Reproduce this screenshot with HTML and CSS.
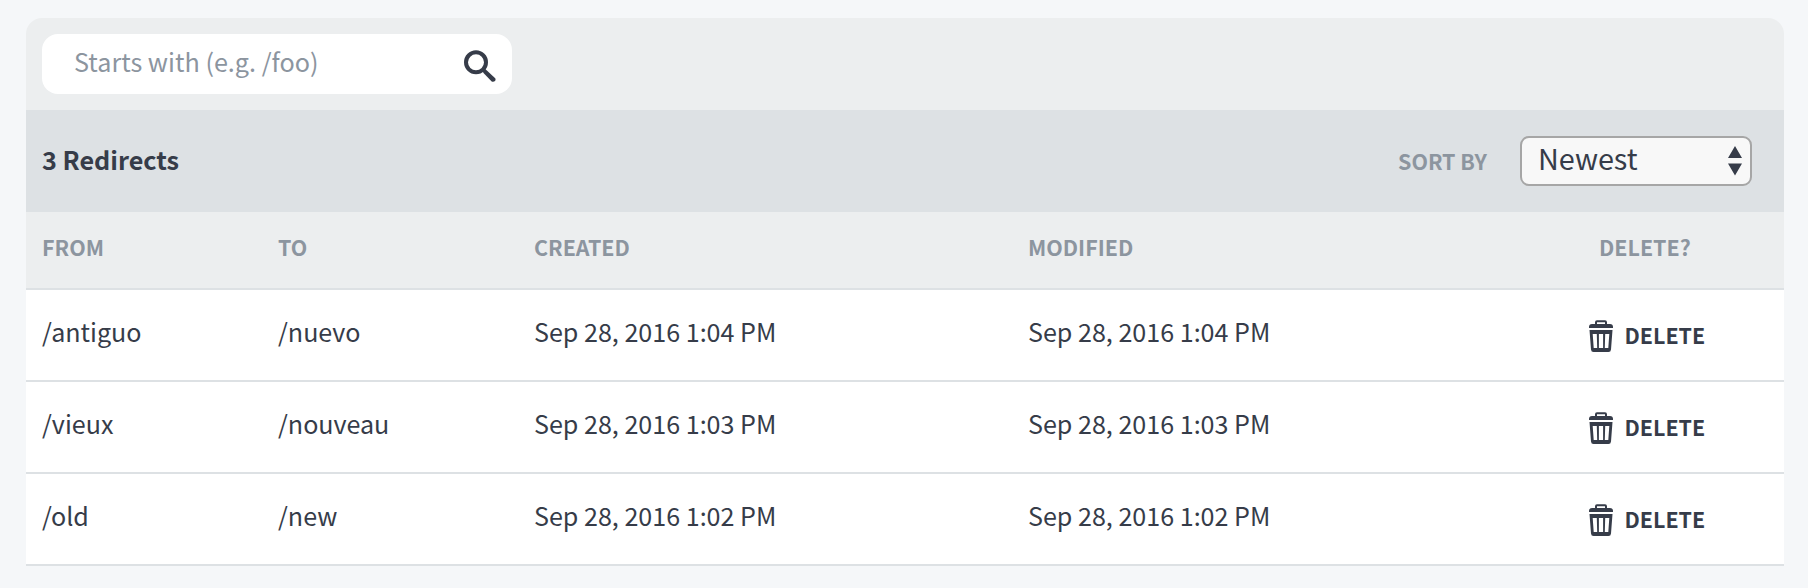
FILE: index.html
```html
<!DOCTYPE html>
<html lang="en">
<head>
<meta charset="utf-8">
<title>Redirects</title>
<link rel="stylesheet" href="styles.css">
</head>
<body>
<svg class="defs" width="0" height="0">
  <symbol id="trash" viewBox="0 0 24 32">
    <path d="M6 5V2.200Q6 .2 8 .2h8q2 0 2 2V5h-2V2.200H8V5z"/>
    <path d="M0 8V7q0-3 3-3h18q3 0 3 3v1z"/>
    <path fill-rule="evenodd" d="M.5 10h23L22 29.500Q21.800 32 19.500 32h-15Q2.200 32 2 29.500zM3.700 14l1 14H8.200l-.4-14zM9.900 14v14h4.200V14zM16.200 14l-.4 14h3.500l1-14z"/>
  </symbol>
</svg>
<main class="panel">
  <div class="toolbar">
    <label class="search">
      <input class="search-input" type="text" placeholder="Starts with (e.g. /foo)">
      <svg class="search-icon" width="32" height="32" viewBox="0 0 32 32"><circle cx="12" cy="12.300" r="10" fill="none" stroke="currentColor" stroke-width="4"/><path d="M18.500 21L21 18.800L31.200 28.200Q32 29.500 31 31Q29.500 32.300 27.700 31.500L19.500 23z"/></svg>
    </label>
  </div>
  <div class="summary">
    <h1 class="count">3 Redirects</h1>
    <div class="sort">
      <span class="sort-label">SORT BY</span>
      <div class="select"><span class="select-value">Newest</span>
        <svg class="select-arrows" width="14" height="30" viewBox="0 0 14 30"><path d="M7 0l7 12H0zM0 17.500h14L7 29.500z"/></svg>
      </div>
    </div>
  </div>
  <div class="row head"><span>FROM</span><span>TO</span><span>CREATED</span><span>MODIFIED</span><span class="head-delete">DELETE?</span></div>
  <div class="row"><span>/antiguo</span><span>/nuevo</span><span>Sep 28, 2016 1:04 PM</span><span>Sep 28, 2016 1:04 PM</span><a class="delete"><svg class="trash" width="24" height="32"><use href="#trash"/></svg><b class="delete-label">DELETE</b></a></div>
  <div class="row"><span>/vieux</span><span>/nouveau</span><span>Sep 28, 2016 1:03 PM</span><span>Sep 28, 2016 1:03 PM</span><a class="delete"><svg class="trash" width="24" height="32"><use href="#trash"/></svg><b class="delete-label">DELETE</b></a></div>
  <div class="row"><span>/old</span><span>/new</span><span>Sep 28, 2016 1:02 PM</span><span>Sep 28, 2016 1:02 PM</span><a class="delete"><svg class="trash" width="24" height="32"><use href="#trash"/></svg><b class="delete-label">DELETE</b></a></div>
</main>
</body>
</html>
```
FILE: styles.css
```css
* { box-sizing: border-box; }
body {
  margin: 0;
  padding: 18px 24px 0 26px;
  background: #f5f7f9;
  color: #363c49;
  fill: #363c49;
  font: 25.08px/36px "Noto Sans CJK SC", "Noto Sans", sans-serif;
}
.defs { display: block; }
.panel { width: 1758px; }
.toolbar {
  height: 92px;
  padding: 16px;
  background: #eceeef;
  border-radius: 16px 16px 0 0;
}
.search {
  display: flex;
  align-items: center;
  width: 470px;
  height: 60px;
  padding: 0 16px 0 32px;
  background: #fff;
  border-radius: 16px;
}
.search-input {
  flex: 1;
  min-width: 0;
  height: 36px;
  margin-bottom: 6px;
  padding: 0;
  border: 0;
  outline: 0;
  background: none;
  font: inherit;
  font-size: 25.2px;
}
.search-input::placeholder { color: #8c959f; opacity: 1; }
.search-icon { margin-top: 3px; }
.summary {
  display: flex;
  align-items: center;
  justify-content: space-between;
  height: 102px;
  padding: 0 32px 0 16px;
  background: #dde1e4;
}
.count { margin: 0 0 4px; font-size: 25.2px; line-height: 36px; font-weight: 700; }
.sort { display: flex; align-items: center; gap: 33px; }
.sort-label { font-size: 21.45px; font-weight: 700; color: #8c959f; }
.select {
  display: flex;
  align-items: center;
  justify-content: space-between;
  width: 232px;
  height: 50px;
  padding: 0 8px 0 16px;
  border: 2px solid #a6a6a6;
  border-radius: 9px;
  background: #f8f8f8;
}
.select-value { margin-bottom: 7px; font-size: 28.8px; }
.row {
  display: grid;
  grid-template-columns: 236px 256px 494px 518px 1fr;
  align-items: center;
  height: 92px;
  padding: 0 0 8px 16px;
  background: #fff;
  border-bottom: 2px solid #dde1e4;
}
.head {
  height: 78px;
  padding-bottom: 7px;
  background: #eceeef;
  color: #8c959f;
  font-size: 21.45px;
  font-weight: 700;
}
.head-delete { padding-left: 53px; }
.delete { display: flex; align-items: center; gap: 11.5px; padding: 8px 0 0 43px; }
.trash { margin-top: 1px; }
.delete-label { font-size: 21.45px; }
```
